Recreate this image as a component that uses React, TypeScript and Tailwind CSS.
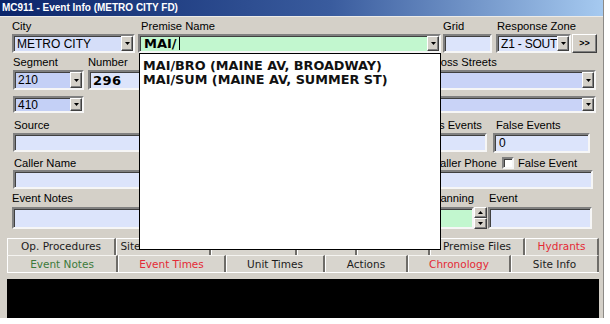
import React from 'react';

const lbl = "text-[11.2px] leading-none text-black whitespace-nowrap";
const sunken =
  "border-2 border-t-[#808080] border-l-[#808080] border-b-[#f6f6f6] border-r-[#f6f6f6] shadow-[inset_1px_1px_0_#404040]";
const raised =
  "bg-[#d4d0c8] border border-t-white border-l-white border-b-[#404040] border-r-[#404040] shadow-[inset_-1px_-1px_0_#808080]";

function Arrow({ up = false }: { up?: boolean }) {
  return (
    <svg width="5" height="3" viewBox="0 0 5 3">
      <path d={up ? "M0 3h5L2.5 0z" : "M0 0h5L2.5 3z"} fill="#000" />
    </svg>
  );
}

function DropBtn() {
  return (
    <div className={`w-[12px] shrink-0 flex items-center justify-center ${raised}`}>
      <Arrow />
    </div>
  );
}

function Combo({ value = '', className = '' }: { value?: string; className?: string }) {
  return (
    <div className={`flex ${sunken} ${className}`}>
      <div className="flex-1 min-w-0 overflow-hidden whitespace-nowrap flex items-center pl-[3px] text-[12px] leading-none">
        {value}
      </div>
      <DropBtn />
    </div>
  );
}

function Field({ className = '', children }: { className?: string; children?: React.ReactNode }) {
  return <div className={`${sunken} bg-[#dce4fb] ${className}`}>{children}</div>;
}

const row1 = [
  { t: 'Op. Procedures', w: 'w-[109px]', c: 'text-[#1c1c1c]' },
  { t: 'Site Instructions', w: 'w-[95px]', c: 'text-[#1c1c1c]' },
  { t: 'Contacts', w: 'w-[86px]', c: 'text-[#1c1c1c]' },
  { t: 'Alerts', w: 'w-[60px]', c: 'text-[#1c1c1c]' },
  { t: 'Hazards', w: 'w-[73px]', c: 'text-[#1c1c1c]' },
  { t: 'Premise Files', w: 'w-[95px]', c: 'text-[#1c1c1c]' },
  { t: 'Hydrants', w: 'w-[74px]', c: 'text-[#e42a36]' },
];

const row2 = [
  { t: 'Event Notes', w: 'w-[111px]', c: 'text-[#3b7a3b]' },
  { t: 'Event Times', w: 'w-[108px]', c: 'text-[#e42a36]' },
  { t: 'Unit Times', w: 'w-[99px]', c: 'text-[#1c1c1c]' },
  { t: 'Actions', w: 'w-[83px]', c: 'text-[#1c1c1c]' },
  { t: 'Chronology', w: 'w-[103px]', c: 'text-[#e42a36]' },
  { t: 'Site Info', w: 'w-[88px]', c: 'text-[#1c1c1c]' },
];

export default function App() {
  return (
    <div className="w-[610px] h-[324px] bg-white font-['Liberation_Sans',Arial,sans-serif] text-black">
      <div className="relative w-[604px] h-[318px] bg-[#d4d0c8] border-r border-r-[#8c8a86] flex flex-col">
        {/* title bar */}
        <div className="h-[16px] shrink-0 bg-[linear-gradient(to_right,#0a246a,#3a5c9e_55%,#a6caf0)] flex items-center pl-[2px] text-[10px] font-bold text-white leading-none">
          MC911 - Event Info (METRO CITY FD)
        </div>
        <div className="h-px shrink-0 bg-[#ecebe8]" />

        {/* city / premise / grid / zone */}
        <div className="flex pl-[12px] h-[36px] shrink-0">
          <div className="w-[123px]">
            <div className={`${lbl} h-[17px] pt-[4px]`}>City</div>
            <Combo className="h-[19px] bg-[#d5def9]" value="METRO CITY" />
          </div>
          <div className="w-[303px] ml-[3px]">
            <div className={`${lbl} h-[17px] pt-[4px] pl-[3px]`}>Premise Name</div>
            <div className={`h-[19px] flex ${sunken} bg-[#c2f7cf]`}>
              <div className="flex-1 flex items-center pl-[4px] font-['DejaVu_Sans',sans-serif] font-bold text-[13px] leading-none">
                MAI/
                <span className="w-px h-[13px] bg-black ml-[2px]" />
              </div>
              <DropBtn />
            </div>
          </div>
          <div className="w-[49px] ml-[2px]">
            <div className={`${lbl} h-[17px] pt-[4px]`}>Grid</div>
            <Field className="h-[19px]" />
          </div>
          <div className="ml-[4px]">
            <div className={`${lbl} h-[17px] pt-[4px] pl-[1px]`}>Response Zone</div>
            <div className="flex">
              <Combo className="h-[19px] w-[75px] bg-[#dce4fb] tracking-[-0.2px]" value="Z1 - SOUTH" />
              <div className={`w-[25px] h-[19px] ml-[1px] flex items-center justify-center text-[9px] font-bold leading-none ${raised}`}>
                &gt;&gt;
              </div>
            </div>
          </div>
        </div>

        {/* segment / number / cross streets */}
        <div className="flex pl-[13px] h-[60px] shrink-0">
          <div className="w-[71px]">
            <div className={`${lbl} h-[17px] pt-[4px]`}>Segment</div>
            <Combo className="h-[20px] bg-[#c4d0f6]" value="210" />
            <Combo className="h-[17px] mt-[6px] bg-[#c4d0f6]" value="410" />
          </div>
          <div className="w-[60px] ml-[4px]">
            <div className={`${lbl} h-[17px] pt-[4px]`}>Number</div>
            <Field className="h-[20px] flex items-center pl-[3px] font-['DejaVu_Sans',sans-serif] font-bold text-[13px] tracking-[0.5px] leading-none">
              296
            </Field>
          </div>
          <div className="w-[169px] ml-[279px]">
            <div className={`${lbl} h-[17px] pt-[4px] pl-[2px]`}>Cross Streets</div>
            <Combo className="h-[20px] bg-[#c9d3f7]" />
            <Combo className="h-[17px] mt-[6px] bg-[#c9d3f7]" />
          </div>
        </div>

        {/* source / previous / false events */}
        <div className="flex pl-[13px] h-[39px] shrink-0">
          <div className="w-[380px]">
            <div className={`${lbl} h-[20px] pt-[7px] pl-[1px]`}>Source</div>
            <Field className="h-[19px]" />
          </div>
          <div className="w-[90px] ml-[4px]">
            <div className={`${lbl} h-[20px] pt-[7px] pl-[4px]`}>Previous Events</div>
            <Field className="h-[19px]" />
          </div>
          <div className="w-[97px] ml-[6px]">
            <div className={`${lbl} h-[20px] pt-[7px] pl-[3px]`}>False Events</div>
            <Field className="h-[20px] flex items-center pl-[4px] text-[12px] leading-none">0</Field>
          </div>
        </div>

        {/* caller */}
        <div className="flex pl-[13px] h-[37px] shrink-0">
          <div className="w-[410px]">
            <div className={`${lbl} h-[18px] pt-[6px] pl-[1px]`}>Caller Name</div>
            <Field className="h-[19px]" />
          </div>
          <div className="w-[166px] ml-[4px]">
            <div className="h-[18px] flex">
              <div className={`${lbl} w-[75px] pt-[6px] pl-[5px]`}>Caller Phone</div>
              <div className={`w-[12px] h-[12px] mt-[5px] bg-white ${sunken}`} />
              <div className={`${lbl} pt-[6px] pl-[4px]`}>False Event</div>
            </div>
            <Field className="h-[19px]" />
          </div>
        </div>

        {/* notes / planning / event */}
        <div className="flex pl-[12px] h-[40px] shrink-0">
          <div className="w-[400px]">
            <div className={`${lbl} h-[18px] pt-[4px]`}>Event Notes</div>
            <Field className="h-[22px]" />
          </div>
          <div className="w-[74px] ml-[1px]">
            <div className={`${lbl} h-[18px] pt-[4px] text-right pr-[13px]`}>Planning</div>
            <div className="flex h-[22px]">
              <div className={`flex-1 bg-[#c2f7cf] ${sunken}`} />
              <div className="w-[13px] flex flex-col">
                <div className={`h-[11px] flex items-center justify-center ${raised}`}>
                  <Arrow up />
                </div>
                <div className={`h-[11px] flex items-center justify-center ${raised}`}>
                  <Arrow />
                </div>
              </div>
            </div>
          </div>
          <div className="w-[104px] ml-[1px]">
            <div className={`${lbl} h-[18px] pt-[4px] pl-[1px]`}>Event</div>
            <Field className="h-[22px]" />
          </div>
        </div>

        {/* tabs */}
        <div className="ml-[7px] mt-[9px] w-[592px] font-['DejaVu_Sans',sans-serif] text-[10.5px] leading-none">
          <div className="flex h-[17px]">
            {row1.map((t) => (
              <div
                key={t.t}
                className={`${t.w} ${t.c} flex items-center justify-center whitespace-nowrap overflow-hidden bg-[#d8d5ce] border-t border-t-white border-l border-l-white border-r-2 border-r-[#6e6c68] pb-[1px]`}
              >
                {t.t}
              </div>
            ))}
          </div>
          <div className="flex h-[18px] border-b border-b-white">
            {row2.map((t) => (
              <div
                key={t.t}
                className={`${t.w} ${t.c} flex items-center justify-center whitespace-nowrap bg-[#d8d5ce] border-t border-t-[#f4f3f0] border-l border-l-white border-r-2 border-r-[#6e6c68]`}
              >
                {t.t}
              </div>
            ))}
          </div>
        </div>
        <div className="h-[6px] shrink-0" />
        <div className="ml-[7px] w-[592px] flex-1 bg-black" />

        {/* premise autocomplete list */}
        <div className="absolute left-[139px] top-[53px] w-[302px] h-[197px] bg-white border border-black pt-[5px] pl-[3px] font-['DejaVu_Sans',sans-serif] font-bold text-[12.8px] leading-[14px] text-[#111]">
          <div>MAI/BRO (MAINE AV, BROADWAY)</div>
          <div>MAI/SUM (MAINE AV, SUMMER ST)</div>
        </div>
      </div>
    </div>
  );
}
